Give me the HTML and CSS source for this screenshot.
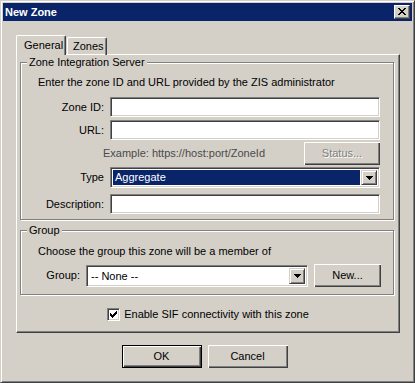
FILE: index.html
```html
<!DOCTYPE html>
<html lang="en">
  <head>
    <meta charset="UTF-8" />
    <title>New Zone</title>
    <link rel="stylesheet" href="styles.css">
  </head>
  <body>
    <div class="window">
      <div class="titlebar">
        <span class="title">New Zone</span>
        <div class="close-btn">
          <svg width="8" height="7" viewBox="0 0 8 7" shape-rendering="crispEdges">
            <path fill="#000" d="M0 0h2v1H0zM6 0h2v1H6zM1 1h2v1H1zM5 1h2v1H5zM2 2h4v1H2zM3 3h2v1H3zM2 4h4v1H2zM1 5h2v1H1zM5 5h2v1H5zM0 6h2v1H0zM6 6h2v1H6z"/>
          </svg>
        </div>
      </div>
      <div class="client">
        <div class="tabs">
          <div class="tab tab-active">General</div>
          <div class="tab">Zones</div>
        </div>
        <div class="panel">
          <div class="groupbox gb-server">
            <span class="legend">Zone Integration Server</span>
            <p class="hint">Enter the zone ID and URL provided by the ZIS administrator</p>
            <div class="row row-id">
              <span class="lbl">Zone ID:</span>
              <div class="field"></div>
            </div>
            <div class="row row-url">
              <span class="lbl">URL:</span>
              <div class="field"></div>
            </div>
            <div class="row row-example">
              <span class="example">Example: https://host:port/ZoneId</span>
              <div class="btn btn-status"><span class="disabled">Status...</span></div>
            </div>
            <div class="row row-type">
              <span class="lbl">Type</span>
              <div class="field combo">
                <span class="combo-value selected">Aggregate</span>
                <div class="combo-btn">
                  <svg width="7" height="4" viewBox="0 0 7 4" shape-rendering="crispEdges">
                    <path fill="#000" d="M0 0h7v1H0zM1 1h5v1H1zM2 2h3v1H2zM3 3h1v1H3z"/>
                  </svg>
                </div>
              </div>
            </div>
            <div class="row row-desc">
              <span class="lbl">Description:</span>
              <div class="field"></div>
            </div>
          </div>

          <div class="groupbox gb-group">
            <span class="legend">Group</span>
            <p class="hint">Choose the group this zone will be a member of</p>
            <div class="row row-group">
              <span class="lbl lbl-group">Group:</span>
              <div class="field combo combo-group">
                <span class="combo-value">-- None --</span>
                <div class="combo-btn">
                  <svg width="7" height="4" viewBox="0 0 7 4" shape-rendering="crispEdges">
                    <path fill="#000" d="M0 0h7v1H0zM1 1h5v1H1zM2 2h3v1H2zM3 3h1v1H3z"/>
                  </svg>
                </div>
              </div>
              <div class="btn btn-new">New...</div>
            </div>
          </div>

          <div class="check-row">
            <div class="checkbox">
              <svg width="7" height="7" viewBox="0 0 7 7" shape-rendering="crispEdges">
                <path fill="#000" d="M6 0h1v1H6zM5 1h2v1H5zM0 2h1v1H0zM4 2h3v1H4zM0 3h2v1H0zM3 3h3v1H3zM0 4h5v1H0zM1 5h3v1H1zM2 6h1v1H2z"/>
              </svg>
            </div>
            <span>Enable SIF connectivity with this zone</span>
          </div>
        </div>

        <div class="buttons">
          <div class="btn btn-default">OK</div>
          <div class="btn">Cancel</div>
        </div>
      </div>
    </div>
  </body>
</html>
```

FILE: styles.css
```css
html,
body {
  margin: 0;
  background: #d4d0c8;
}
body {
  font-family: "Liberation Sans", Arial, sans-serif;
  font-size: 11px;
  line-height: 13px;
  color: #000;
}
.window {
  box-sizing: border-box;
  width: 415px;
  height: 383px;
  padding: 2px;
  border: 1px solid;
  border-color: #d4d0c8 #404040 #404040 #d4d0c8;
  box-shadow: inset 1px 1px #fff, inset -1px -1px #808080;
  background: #d4d0c8;
}
.titlebar {
  height: 18px;
  background: #0a246a;
  display: flex;
  align-items: center;
  padding: 0 2px 0 2px;
}
.title {
  flex: 1;
  color: #fff;
  font-weight: bold;
}
.close-btn {
  box-sizing: border-box;
  width: 16px;
  height: 14px;
  background: #d4d0c8;
  border: 1px solid;
  border-color: #fff #404040 #404040 #fff;
  box-shadow: inset -1px -1px #808080;
  display: flex;
  align-items: center;
  justify-content: center;
  padding: 0 0 1px 0;
}
.close-btn svg {
  display: block;
}
.client {
  padding: 14px 0 0 13px;
}

/* tabs */
.tabs {
  display: flex;
  height: 20px;
  margin-bottom: -1px;
}
.tab {
  box-sizing: border-box;
  height: 18px;
  margin-top: 2px;
  width: 40px;
  border: 1px solid;
  border-bottom: none;
  border-color: #fff #404040 #fff #fff;
  border-top-left-radius: 2px;
  border-top-right-radius: 2px;
  box-shadow: inset -1px 0 #808080;
  padding: 2px 0 0 5px;
  margin-left: 1px;
}
.tab-active {
  position: relative;
  z-index: 1;
  width: 50px;
  height: 20px;
  margin-top: 0;
  margin-left: 0;
  padding: 3px 0 0 7px;
  background: #d4d0c8;
}

/* panel */
.panel {
  box-sizing: border-box;
  width: 384px;
  height: 279px;
  border: 1px solid;
  border-color: #fff #404040 #404040 #fff;
  box-shadow: inset -1px -1px #808080;
  padding: 7px 0 0 3px;
}
.groupbox {
  position: relative;
  box-sizing: border-box;
  width: 374px;
  border: 1px solid #808080;
  box-shadow: inset 1px 1px #fff, 1px 1px #fff;
}
.gb-server {
  height: 158px;
  padding: 13px 13px 0 0;
}
.gb-group {
  height: 65px;
  margin-top: 10px;
  padding: 14px 12px 0 0;
}
.legend {
  position: absolute;
  top: -7px;
  left: 6px;
  padding: 0 2px;
  background: #d4d0c8;
}
.hint {
  margin: 0 0 0 17px;
  height: 13px;
  white-space: nowrap;
}
.row {
  display: flex;
  align-items: center;
}
.lbl {
  width: 83px;
  margin-right: 6px;
  text-align: right;
}
.row-id {
  margin-top: 8px;
  height: 20px;
}
.row-url {
  margin-top: 3px;
  height: 20px;
}
.row-example {
  margin-top: 2px;
  height: 23px;
}
.row-type {
  margin-top: 2px;
  height: 21px;
}
.row-desc {
  margin-top: 6px;
  height: 20px;
}
.row-group {
  margin-top: 6px;
  height: 23px;
}
.field {
  box-sizing: border-box;
  flex: 1;
  height: 20px;
  background: #fff;
  border: 1px solid;
  border-color: #808080 #fff #fff #808080;
  box-shadow: inset 1px 1px #404040, inset -1px -1px #d4d0c8;
}
.example {
  margin-left: 82px;
  color: #4a4a4a;
  flex: 1;
}

/* combo boxes */
.combo {
  height: 21px;
  display: flex;
  padding: 1px 1px 1px 1px;
}
.combo-group {
  flex: none;
  width: 222px;
  height: 22px;
}
.combo-value {
  flex: 1;
  margin: 1px 1px 1px 1px;
  padding-left: 2px;
  line-height: 15px;
}
.combo-value.selected {
  background: #0a246a;
  color: #fff;
}
.combo-group .combo-value {
  line-height: 16px;
}
.combo-btn {
  box-sizing: border-box;
  width: 16px;
  margin: 1px 1px 1px 0;
  background: #d4d0c8;
  border: 1px solid;
  border-color: #d4d0c8 #404040 #404040 #d4d0c8;
  box-shadow: inset 1px 1px #fff, inset -1px -1px #808080;
  display: flex;
  align-items: center;
  justify-content: center;
}
.combo-btn svg {
  display: block;
}

/* buttons */
.btn {
  box-sizing: border-box;
  width: 80px;
  height: 23px;
  background: #d4d0c8;
  box-shadow: inset 1px 1px #fff, inset -1px -1px #404040, inset -2px -2px #808080;
  display: flex;
  align-items: center;
  justify-content: center;
}
.btn-default {
  border: 1px solid #000;
}
.btn-status {
  width: 76px;
}
.btn-new {
  width: 67px;
  margin-left: 6px;
}
.lbl-group {
  width: 59px;
}
.disabled {
  color: #808080;
  text-shadow: 1px 1px #fff;
}

/* checkbox */
.check-row {
  display: flex;
  align-items: center;
  justify-content: center;
  margin-top: 13px;
  margin-right: 3px;
  height: 13px;
  gap: 4px;
}
.checkbox {
  box-sizing: border-box;
  width: 13px;
  height: 13px;
  background: #fff;
  border: 1px solid;
  border-color: #808080 #fff #fff #808080;
  box-shadow: inset 1px 1px #404040, inset -1px -1px #d4d0c8;
  display: flex;
  align-items: center;
  justify-content: center;
}
.checkbox svg {
  display: block;
}

.buttons {
  display: flex;
  justify-content: center;
  gap: 6px;
  margin-top: 12px;
  padding-right: 19px;
}
```
